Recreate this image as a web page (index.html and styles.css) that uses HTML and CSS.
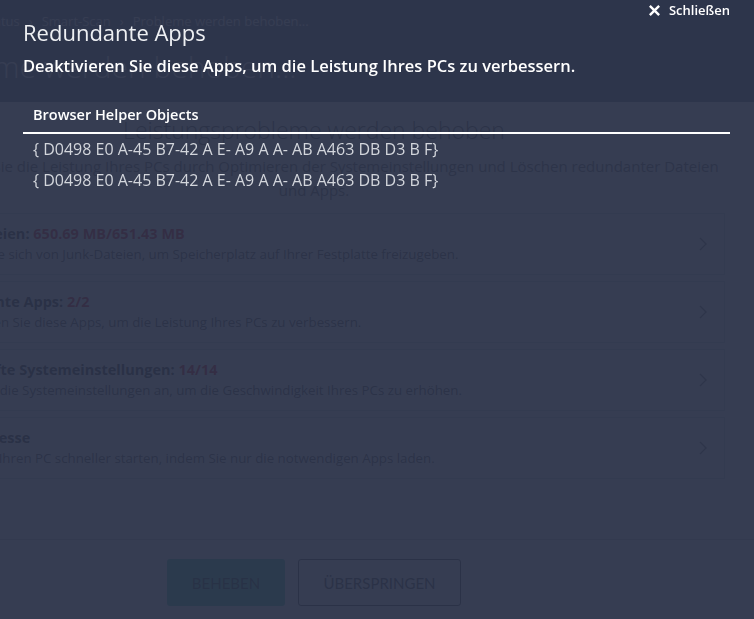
FILE: index.html
```html
<!DOCTYPE html>
<html>
<head>
  <meta charset="utf-8">
  <title>Smart-Scan</title>
  <link rel="stylesheet" href="styles.css">
</head>
<body>
  <div class="app">
    <header class="top">
      <div class="crumbs">
        <span>Status</span><span>›</span><span>Smart-Scan</span><span>›</span><span>Probleme werden behoben...</span>
      </div>
      <h1 class="top-title">Probleme werden behoben...</h1>
    </header>

    <main class="content">
      <h2 class="fix-title">Leistungsprobleme werden behoben</h2>
      <p class="fix-text">Verbessern Sie die Leistung Ihres PCs durch Optimieren der Systemeinstellungen und Löschen redundanter Dateien und Apps.</p>

      <div class="cards">
        <div class="card">
          <div class="card-text">
            <div class="card-title">Junk-Dateien: <span class="count">650.69 MB/651.43 MB</span></div>
            <div class="card-desc">Befreien Sie sich von Junk-Dateien, um Speicherplatz auf Ihrer Festplatte freizugeben.</div>
          </div>
          <svg class="chev" viewBox="0 0 8 14"><path d="M1 1 L7 7 L1 13"/></svg>
        </div>
        <div class="card">
          <div class="card-text">
            <div class="card-title">Redundante Apps: <span class="count">2/2</span></div>
            <div class="card-desc">Deaktivieren Sie diese Apps, um die Leistung Ihres PCs zu verbessern.</div>
          </div>
          <svg class="chev" viewBox="0 0 8 14"><path d="M1 1 L7 7 L1 13"/></svg>
        </div>
        <div class="card">
          <div class="card-text">
            <div class="card-title">Fehlerhafte Systemeinstellungen: <span class="count">14/14</span></div>
            <div class="card-desc">Passen Sie die Systemeinstellungen an, um die Geschwindigkeit Ihres PCs zu erhöhen.</div>
          </div>
          <svg class="chev" viewBox="0 0 8 14"><path d="M1 1 L7 7 L1 13"/></svg>
        </div>
        <div class="card">
          <div class="card-text">
            <div class="card-title">Startprozesse</div>
            <div class="card-desc">Lassen Sie Ihren PC schneller starten, indem Sie nur die notwendigen Apps laden.</div>
          </div>
          <svg class="chev" viewBox="0 0 8 14"><path d="M1 1 L7 7 L1 13"/></svg>
        </div>
      </div>
    </main>

    <footer class="actions">
      <button class="btn btn-fix">Beheben</button>
      <button class="btn btn-skip">Überspringen</button>
    </footer>
  </div>

  <div class="overlay">
    <div class="modal-head">
      <button class="close">
        <svg viewBox="0 0 14 14"><path d="M2 2 L12 12 M12 2 L2 12"/></svg>
        Schließen
      </button>
      <h1 class="modal-title">Redundante Apps</h1>
      <p class="modal-sub">Deaktivieren Sie diese Apps, um die Leistung Ihres PCs zu verbessern.</p>
    </div>
    <div class="modal-body">
      <h3 class="group">Browser Helper Objects</h3>
      <ul class="items">
        <li>{ D0498 E0 A-45 B7-42 A E- A9 A A- AB A463 DB D3 B F}</li>
        <li>{ D0498 E0 A-45 B7-42 A E- A9 A A- AB A463 DB D3 B F}</li>
      </ul>
    </div>
  </div>
</body>
</html>
```

FILE: styles.css
```css
* {
  box-sizing: border-box;
}

body {
  margin: 0;
  height: 619px;
  overflow: hidden;
  font-family: "Open Sans", "Lato", sans-serif;
  background-color: #f5f6f8;
}

/* page behind the dialog */
.app {
  width: 900px;
  margin-left: -97px;
}

.top {
  height: 102px;
  padding-top: 12px;
  background-color: #6c748a;
  color: #fff;
}

.crumbs {
  display: flex;
  gap: 9px;
  margin-left: 79px;
  font-size: 13px;
  line-height: 18px;
}

.top-title {
  margin: 17px 0 0 2px;
  font-size: 30px;
  font-weight: 300;
  line-height: 40px;
}

.content {
  width: 822px;
  padding-top: 10px;
  text-align: center;
}

.fix-title {
  margin: 0;
  font-size: 23px;
  font-weight: 300;
  line-height: 36px;
  color: #555;
}

.fix-text {
  margin: 6px 0 0;
  font-size: 15px;
  line-height: 24px;
  color: #666;
}

.cards {
  display: flex;
  flex-direction: column;
  gap: 6px;
  margin-top: 11px;
  text-align: left;
}

.card {
  display: flex;
  align-items: center;
  height: 62px;
  padding: 0 17px 0 27px;
  border: 1px solid #cdd1d8;
  background-color: #fff;
}

.card-text {
  flex: 1;
}

.card-title {
  font-size: 14.5px;
  font-weight: 700;
  line-height: 20px;
  color: #333;
}

.count {
  color: #d0021b;
}

.card-desc {
  font-size: 13.3px;
  line-height: 20px;
  color: #555;
}

.chev {
  width: 8px;
  height: 14px;
  fill: none;
  stroke: #777;
  stroke-width: 1.4;
}

.actions {
  display: flex;
  justify-content: center;
  gap: 13px;
  margin-top: 60px;
  padding: 19px 78px 0 0;
  border-top: 1px solid #ccc;
}

.btn {
  height: 47px;
  font-family: "Lato", sans-serif;
  font-size: 15px;
  text-transform: uppercase;
  border-radius: 3px;
}

.btn-fix {
  width: 118px;
  border: none;
  background-color: #4cc9a6;
  color: #1d4238;
}

.btn-skip {
  width: 163px;
  border: 1px solid #444;
  background-color: transparent;
  color: #444;
}

/* dialog */
.overlay {
  position: fixed;
  top: 0;
  right: 0;
  bottom: 0;
  left: 0;
  background-color: rgba(41, 49, 71, 0.94);
  color: #fff;
}

.modal-head {
  position: relative;
  height: 102px;
  padding: 18px 24px 0 23px;
}

.close {
  position: absolute;
  top: 3px;
  right: 24px;
  display: flex;
  align-items: center;
  gap: 8px;
  padding: 0;
  border: none;
  background: none;
  color: #fff;
  font-family: inherit;
  font-size: 13px;
  font-weight: 600;
  line-height: 14px;
  cursor: pointer;
}

.close svg {
  width: 13px;
  height: 13px;
  fill: none;
  stroke: #fff;
  stroke-width: 2.6;
}

.modal-title {
  margin: 0;
  font-size: 22px;
  font-weight: 400;
  line-height: 28px;
  color: #eef0f3;
}

.modal-sub {
  margin: 8px 0 0;
  font-size: 16.5px;
  font-weight: 600;
  line-height: 24px;
}

.modal-body {
  padding: 3px 24px 0 23px;
}

.group {
  margin: 0;
  padding: 0 0 7px 10px;
  border-bottom: 2px solid #fff;
  font-size: 14.5px;
  font-weight: 600;
  line-height: 20px;
}

.items {
  list-style: none;
  margin: 0;
  padding: 0;
}

.items li {
  padding-left: 10px;
  font-size: 16px;
  line-height: 31px;
  color: #d3d6dc;
}
```
